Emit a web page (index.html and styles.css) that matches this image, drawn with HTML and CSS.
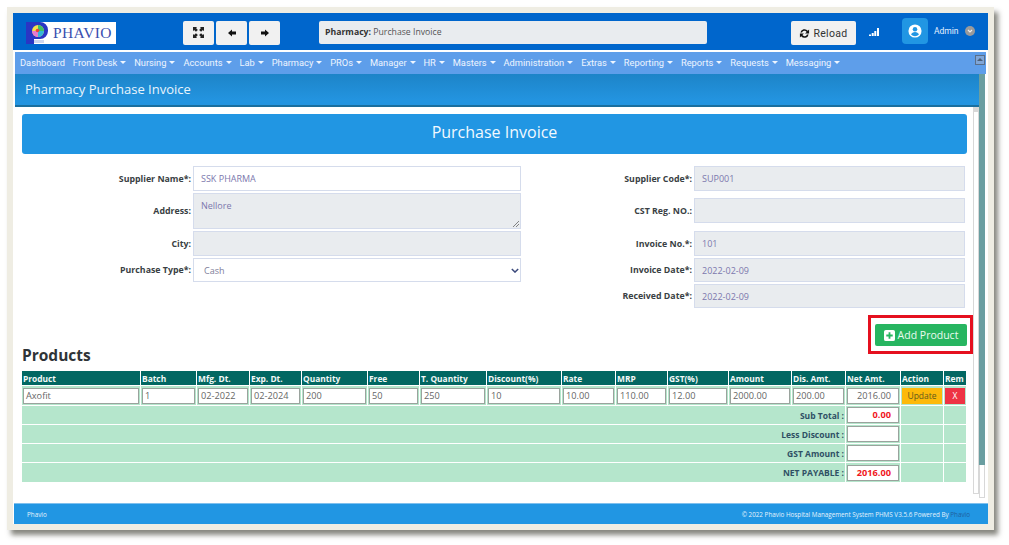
FILE: index.html
```html
<!DOCTYPE html>
<html lang="en">
<head>
<meta charset="utf-8">
<title>Pharmacy Purchase Invoice</title>
<link rel="stylesheet" href="styles.css">
</head>
<body>
<div class="frame">
  <header class="topbar">
    <div class="logo">
      <svg class="logo-mark" viewBox="0 0 22 22" width="22" height="22">
        <path d="M0 0h14a8 8 0 0 1 8 8v1a8 8 0 0 1-8 8H8v5H0z" fill="#2a35c4"/>
        <circle cx="12" cy="9" r="6" fill="#f6e24a"/>
        <path d="M12 3a6 6 0 0 1 6 6h-6z" fill="#3fbf6a"/>
        <path d="M12 9h6a6 6 0 0 1-6 6z" fill="#35b6d8"/>
        <path d="M12 9v6a6 6 0 0 1-6-6z" fill="#e77bd0"/>
        <circle cx="11.500" cy="8.500" r="1.800" fill="#e8433f"/>
        <path d="M8 18h10v3H8z" fill="#cfd6ee"/>
      </svg>
      <span class="logo-text">PHAVIO</span>
    </div>
    <div class="tool-group">
      <button class="tool-btn" type="button" aria-label="Fullscreen">
        <svg viewBox="0 0 12 12" width="11" height="11"><path d="M0 0h4.500L3.300 1.200 5.300 3.200 3.200 5.300 1.200 3.300 0 4.500zM12 0v4.500L10.800 3.300 8.800 5.300 6.700 3.200 8.700 1.200 7.500 0zM0 12V7.500l1.200 1.200 2-2 2.100 2.100-2 2L4.500 12zM12 12H7.500l1.200-1.200-2-2 2.100-2.100 2 2L12 7.500z" fill="#222"/></svg>
      </button>
      <button class="tool-btn" type="button" aria-label="Back">
        <svg viewBox="0 0 10 10" width="8" height="8"><path d="M0 5l5-4.500V3h5v4H5v2.500z" fill="#111"/></svg>
      </button>
      <button class="tool-btn" type="button" aria-label="Forward">
        <svg viewBox="0 0 10 10" width="8" height="8"><path d="M10 5L5 .5V3H0v4h5v2.500z" fill="#111"/></svg>
      </button>
    </div>
    <div class="crumb"><b>Pharmacy:</b> Purchase Invoice</div>
    <button class="reload" type="button">
      <svg viewBox="0 0 12 12" width="11" height="11"><path d="M1.500 5A4.600 4.600 0 0 1 9.600 3L11 1.600V6H6.600l1.700-1.700A2.800 2.800 0 0 0 3.300 5zM10.500 7A4.600 4.600 0 0 1 2.400 9L1 10.400V6h4.400L3.700 7.700A2.800 2.800 0 0 0 8.700 7z" fill="#111"/></svg>
      Reload
    </button>
    <svg class="signal" viewBox="0 0 10 8" width="10" height="8"><path d="M0 6.500h2V8H0zM2.700 5h2v3h-2zM5.300 3h2v5h-2zM8 0h2v8H8z" fill="#fff"/></svg>
    <div class="avatar">
      <svg viewBox="0 0 16 16" width="14" height="14"><circle cx="8" cy="8" r="7.500" fill="#fff"/><circle cx="8" cy="6" r="2.600" fill="#2196e3"/><path d="M3.500 12c.6-2 2.400-3 4.500-3s3.900 1 4.500 3a6 6 0 0 1-9 0z" fill="#2196e3"/></svg>
    </div>
    <span class="admin">Admin</span>
    <span class="admin-caret">
      <svg viewBox="0 0 10 10" width="10" height="10"><circle cx="5" cy="5" r="5" fill="#9a9a9a"/><path d="M3 4l2 2 2-2" fill="none" stroke="#eee" stroke-width="1.200"/></svg>
    </span>
  </header>

  <div class="shell">
    <nav class="nav">
      <a class="nav-item">Dashboard</a>
      <a class="nav-item caret">Front Desk</a>
      <a class="nav-item caret">Nursing</a>
      <a class="nav-item caret">Accounts</a>
      <a class="nav-item caret">Lab</a>
      <a class="nav-item caret">Pharmacy</a>
      <a class="nav-item caret">PROs</a>
      <a class="nav-item caret">Manager</a>
      <a class="nav-item caret">HR</a>
      <a class="nav-item caret">Masters</a>
      <a class="nav-item caret">Administration</a>
      <a class="nav-item caret">Extras</a>
      <a class="nav-item caret">Reporting</a>
      <a class="nav-item caret">Reports</a>
      <a class="nav-item caret">Requests</a>
      <a class="nav-item caret">Messaging</a>
      <span class="nav-collapse"></span>
    </nav>
    <div class="body-row">
      <div class="content">
        <h1 class="page-title">Pharmacy Purchase Invoice</h1>
        <div class="main-wrap">
          <main class="main">
            <div class="card-head">Purchase Invoice</div>
            <div class="form">
              <div class="form-col form-left">
                <div class="field h25"><label>Supplier Name*:</label><div class="ctl">SSK PHARMA</div></div>
                <div class="field h36"><label>Address:</label><div class="ctl off area">Nellore<svg class="grip" viewBox="0 0 6 6" width="6" height="6"><path d="M0 6l6-6M3 6l3-3" stroke="#555" stroke-width=".7"/></svg></div></div>
                <div class="field h25"><label>City:</label><div class="ctl off"></div></div>
                <div class="field h24"><label>Purchase Type*:</label><div class="ctl sel">Cash<svg viewBox="0 0 10 6" width="8" height="5"><path d="M1 1l4 4 4-4" fill="none" stroke="#3c4a7c" stroke-width="1.800"/></svg></div></div>
              </div>
              <div class="form-col form-right">
                <div class="field h25"><label>Supplier Code*:</label><div class="ctl off">SUP001</div></div>
                <div class="field h25 gap-top"><label>CST Reg. NO.:</label><div class="ctl off"></div></div>
                <div class="field h25 gap-top"><label>Invoice No.*:</label><div class="ctl off">101</div></div>
                <div class="field h24"><label>Invoice Date*:</label><div class="ctl off">2022-02-09</div></div>
                <div class="field h24"><label>Received Date*:</label><div class="ctl off">2022-02-09</div></div>
              </div>
            </div>
            <div class="add-row">
              <h2 class="products">Products</h2>
              <div class="highlight">
                <button class="add-btn" type="button">
                  <svg viewBox="0 0 12 12" width="11" height="11"><path fill-rule="evenodd" d="M2 0h8a2 2 0 0 1 2 2v8a2 2 0 0 1-2 2H2a2 2 0 0 1-2-2V2a2 2 0 0 1 2-2zM5 2.500V5H2.500v2H5v2.500h2V7h2.500V5H7V2.500z" fill="#fff"/></svg>
                  Add Product
                </button>
              </div>
            </div>
            <table class="grid">
              <colgroup>
                <col class="w118"><col class="w55"><col class="w52"><col class="w51"><col class="w65"><col class="w51"><col class="w66"><col class="w74"><col class="w53"><col class="w51"><col class="w60"><col class="w62"><col class="w53"><col class="w54"><col class="w42"><col class="w22">
              </colgroup>
              <thead>
                <tr><th>Product</th><th>Batch</th><th>Mfg. Dt.</th><th>Exp. Dt.</th><th>Quantity</th><th>Free</th><th>T. Quantity</th><th>Discount(%)</th><th>Rate</th><th>MRP</th><th>GST(%)</th><th>Amount</th><th>Dis. Amt.</th><th>Net Amt.</th><th>Action</th><th>Rem</th></tr>
              </thead>
              <tbody>
                <tr class="item">
                  <td><span class="box">Axofit</span></td>
                  <td><span class="box">1</span></td>
                  <td><span class="box">02-2022</span></td>
                  <td><span class="box">02-2024</span></td>
                  <td><span class="box">200</span></td>
                  <td><span class="box">50</span></td>
                  <td><span class="box">250</span></td>
                  <td><span class="box">10</span></td>
                  <td><span class="box">10.00</span></td>
                  <td><span class="box">110.00</span></td>
                  <td><span class="box">12.00</span></td>
                  <td><span class="box">2000.00</span></td>
                  <td><span class="box">200.00</span></td>
                  <td><span class="box right">2016.00</span></td>
                  <td class="act"><span class="btn-update">Update</span></td>
                  <td class="act"><span class="btn-x">X</span></td>
                </tr>
                <tr class="sum"><td colspan="13" class="sum-label">Sub Total :</td><td><span class="box right red">0.00</span></td><td></td><td></td></tr>
                <tr class="sum"><td colspan="13" class="sum-label">Less Discount :</td><td><span class="box right"></span></td><td></td><td></td></tr>
                <tr class="sum"><td colspan="13" class="sum-label">GST Amount :</td><td><span class="box right"></span></td><td></td><td></td></tr>
                <tr class="sum last"><td colspan="13" class="sum-label">NET PAYABLE :</td><td><span class="box right red">2016.00</span></td><td></td><td></td></tr>
              </tbody>
            </table>
          </main>
          <div class="track"></div>
        </div>
      </div>
      <div class="scrollbar"><div class="thumb"></div></div>
    </div>
    <footer class="footer">
      <span>Phavio</span>
      <span>© 2022 Phavio Hospital Management System PHMS V3.5.6 Powered By <em>Phavio</em></span>
    </footer>
  </div>
</div>
</body>
</html>
```

FILE: styles.css
```css
* { box-sizing: border-box; }
html, body { margin: 0; height: 100%; background: #fff; }
body { padding: 7px 15px 15px 7px; font-family: "Open Sans", "Liberation Sans", sans-serif; overflow: hidden; }

.frame {
  width: 987px; height: 523px;
  background: #efede3;
  padding: 6px;
  box-shadow: 4px 5px 5px rgba(70,70,60,.65);
  display: flex; flex-direction: column;
}

.topbar {
  height: 39px; flex: none;
  background: #0066cc;
  border-bottom: 2px solid #fff;
  display: flex; align-items: center;
  padding: 2px 0 0 13px;
}
.logo {
  width: 90px; height: 22px; background: #fff;
  display: flex; align-items: center; flex: none;
}
.logo-mark { flex: none; }
.logo-text { font: 15.500px "Liberation Serif", serif; color: #3a4fb0; letter-spacing: .4px; margin-left: 5px; white-space: nowrap; }
.tool-group { display: flex; gap: 2px; margin-left: 67px; flex: none; }
.tool-btn {
  width: 31px; height: 24px; background: #f1f1f1; border: 0; border-radius: 2px; padding: 0;
  display: flex; align-items: center; justify-content: center;
}
.crumb {
  width: 388px; height: 23px; margin-left: 39px; flex: none;
  background: #e9ecef; border-radius: 2px; color: #555;
  font: 8.700px/23px "Open Sans", sans-serif; padding-left: 6px;
}
.crumb b { color: #333; }
.reload {
  width: 65px; height: 24px; margin: 1px 0 0 84px; flex: none;
  background: #f1f1f1; border: 0; border-radius: 2px; padding: 0; color: #333;
  font: 10.500px "Roboto", sans-serif; letter-spacing: .3px;
  display: flex; align-items: center; justify-content: center; gap: 3px;
}
.signal { margin: 0 0 1px 13px; flex: none; }
.avatar {
  width: 26px; height: 26px; margin: 0 0 4px 23px; background: #2196e3; border-radius: 4px;
  display: flex; align-items: center; justify-content: center; flex: none;
}
.admin { color: #e6f0ff; font: 8.500px "Roboto", sans-serif; margin: 0 0 4px 6px; }
.admin-caret { margin: 0 0 4px 6px; display: flex; }

.shell { flex: 1; min-height: 0; display: flex; flex-direction: column; background: #fff; }
.nav {
  height: 22px; flex: none; margin: 0 2px;
  background: #5e9eea;
  display: flex; align-items: center; position: relative;
  padding: 0 0 2px 5px; gap: 7.900px;
  font: 9.300px "Roboto", sans-serif; color: #eef5ff;
}
.nav-item { white-space: nowrap; }
.nav-item.caret::after {
  content: ""; display: inline-block; margin-left: 3px; vertical-align: 2px;
  border-top: 3px solid #eef5ff; border-left: 3px solid transparent; border-right: 3px solid transparent;
}
.nav-collapse {
  position: absolute; right: 1px; top: 3px; width: 10px; height: 10px;
  border: 1.500px solid #5a6f8a; background: #7fa6d8;
}
.nav-collapse::after {
  content: ""; position: absolute; left: 1px; top: 1.500px;
  border-bottom: 3px solid #4a5f7a; border-left: 3px solid transparent; border-right: 3px solid transparent;
}

.body-row { flex: 1; min-height: 0; display: flex; margin-left: 2px; }
.content { width: 964px; flex: none; }
.page-title {
  margin: 0; height: 33px;
  background: linear-gradient(#1d84c8, #2394e0 85%);
  border-bottom: 2px solid #1a6f9f;
  color: #e9f4fc; font: 400 13px/31px "Open Sans", sans-serif; padding-left: 10px;
}
.main-wrap { display: flex; }
.main { width: 958px; flex: none; padding: 7px 6px 0 7px; }
.track { width: 6px; height: 387px; background: #fff; border: 1px solid #d8d8d8; border-top-width: 5px; }
.card-head {
  height: 40px; background: #2196e3; border-radius: 3px;
  color: #f2f9ff; font-size: 16px; line-height: 37px; text-align: center;
}

.form { display: flex; margin-top: 12px; height: 146px; }
.form-col { display: flex; flex-direction: column; }
.form-left { width: 501px; }
.form-right { width: 444px; }
.field { display: flex; align-items: center; margin-bottom: 2px; }
.gap-top { margin-top: 5px; }
.field:nth-child(3).gap-top { margin-top: 6px; }
.h25 { height: 25px; } .h36 { height: 36px; } .h24 { height: 24px; }
.field label {
  width: 171px; flex: none; text-align: right; padding-right: 2px;
  font-size: 8.800px; font-weight: 700; color: #3a3f44;
}
.ctl {
  height: 100%; flex: 1; border: 1px solid #d5dcec; background: #fff;
  font-size: 9px; color: #7c78ad; padding: 0 7px; display: flex; align-items: center;
}
.form-left .ctl { max-width: 328px; }
.form-right .ctl { max-width: 271px; }
.ctl.off { background: #e9ecef; }
.ctl.area { align-items: flex-start; padding-top: 5px; position: relative; }
.grip { position: absolute; right: 1px; bottom: 1px; }
.ctl.sel { justify-content: space-between; padding: 0 1px 0 10px; color: #7e7e9a; }

.add-row { display: flex; justify-content: space-between; align-items: flex-start; margin: 4px -6px 0 0; height: 55px; }
.products { margin: 29px 0 0; font-size: 15.500px; line-height: 20px; font-weight: 700; color: #2f3437; }
.highlight { border: 3px solid #e5101f; padding: 6px 3px 0 4px; height: 39px; width: 105px; margin-top: -1px; }
.add-btn {
  width: 92px; height: 22px; border: 0; border-radius: 2px; background: #27b560; color: #eafbf0;
  font: 10.500px "Open Sans", sans-serif; padding: 0;
  display: flex; align-items: center; justify-content: center; gap: 3px;
}

.grid { width: 946px; table-layout: fixed; border-collapse: separate; border-spacing: 1px; margin-top: -1px; margin-left: -1px; background: #fff; }
.w118{width:118px}.w55{width:55px}.w52{width:52px}.w51{width:51px}.w65{width:65px}.w66{width:66px}.w74{width:74px}.w53{width:53px}.w60{width:60px}.w62{width:62px}.w54{width:54px}.w42{width:42px}.w22{width:22px}
.grid th {
  height: 14px; background: #026762; color: #f2f8f7; padding: 0 0 0 1px;
  font-size: 8.400px; font-weight: 700; text-align: left; white-space: nowrap; overflow: hidden;
  line-height: 13px;
}
.grid td { background: #b5e6cc; padding: 1px; height: 18px; }
.grid tr.item td { height: 19px; padding: 1.500px 1px; }
.grid tr.last td { height: 19px; }
.box {
  display: block; height: 16px; background: #fff; border: 1.500px solid #9aa39d;
  font-size: 9.200px; line-height: 13px; color: #666; padding: 0 2px; white-space: nowrap; overflow: hidden;
}
.box.right { text-align: right; padding-right: 7px; }
.box.red { color: #f01822; font-weight: 700; }
.sum-label { text-align: right; font-size: 8.500px; font-weight: 700; color: #2f5064; padding-right: 1px !important; }
.act { text-align: center; }
.btn-update { display: block; height: 16px; background: #fdb90a; color: #5f5a1c; font-size: 8.500px; line-height: 16px; }
.btn-x { display: block; height: 16px; width: 20px; margin: 0 auto; background: #ee3344; color: #fff; font-size: 8.500px; line-height: 16px; }

.scrollbar { width: 6px; flex: none; height: 424px; background: #fff; border: 1px solid #d8d8d8; border-top: 0; }
.thumb { width: 6px; height: 391px; margin-left: -1px; background: #6a9ea0; }

.footer {
  height: 21px; flex: none; background: #2196e3; border-top: 1px solid #7fc0ee;
  display: flex; justify-content: space-between; align-items: center;
  padding: 0 18px 0 13px; margin-left: 1px;
  font-size: 6.300px; color: #e4f2fc;
}
.footer em { font-style: normal; color: #1f5f9e; }
```
